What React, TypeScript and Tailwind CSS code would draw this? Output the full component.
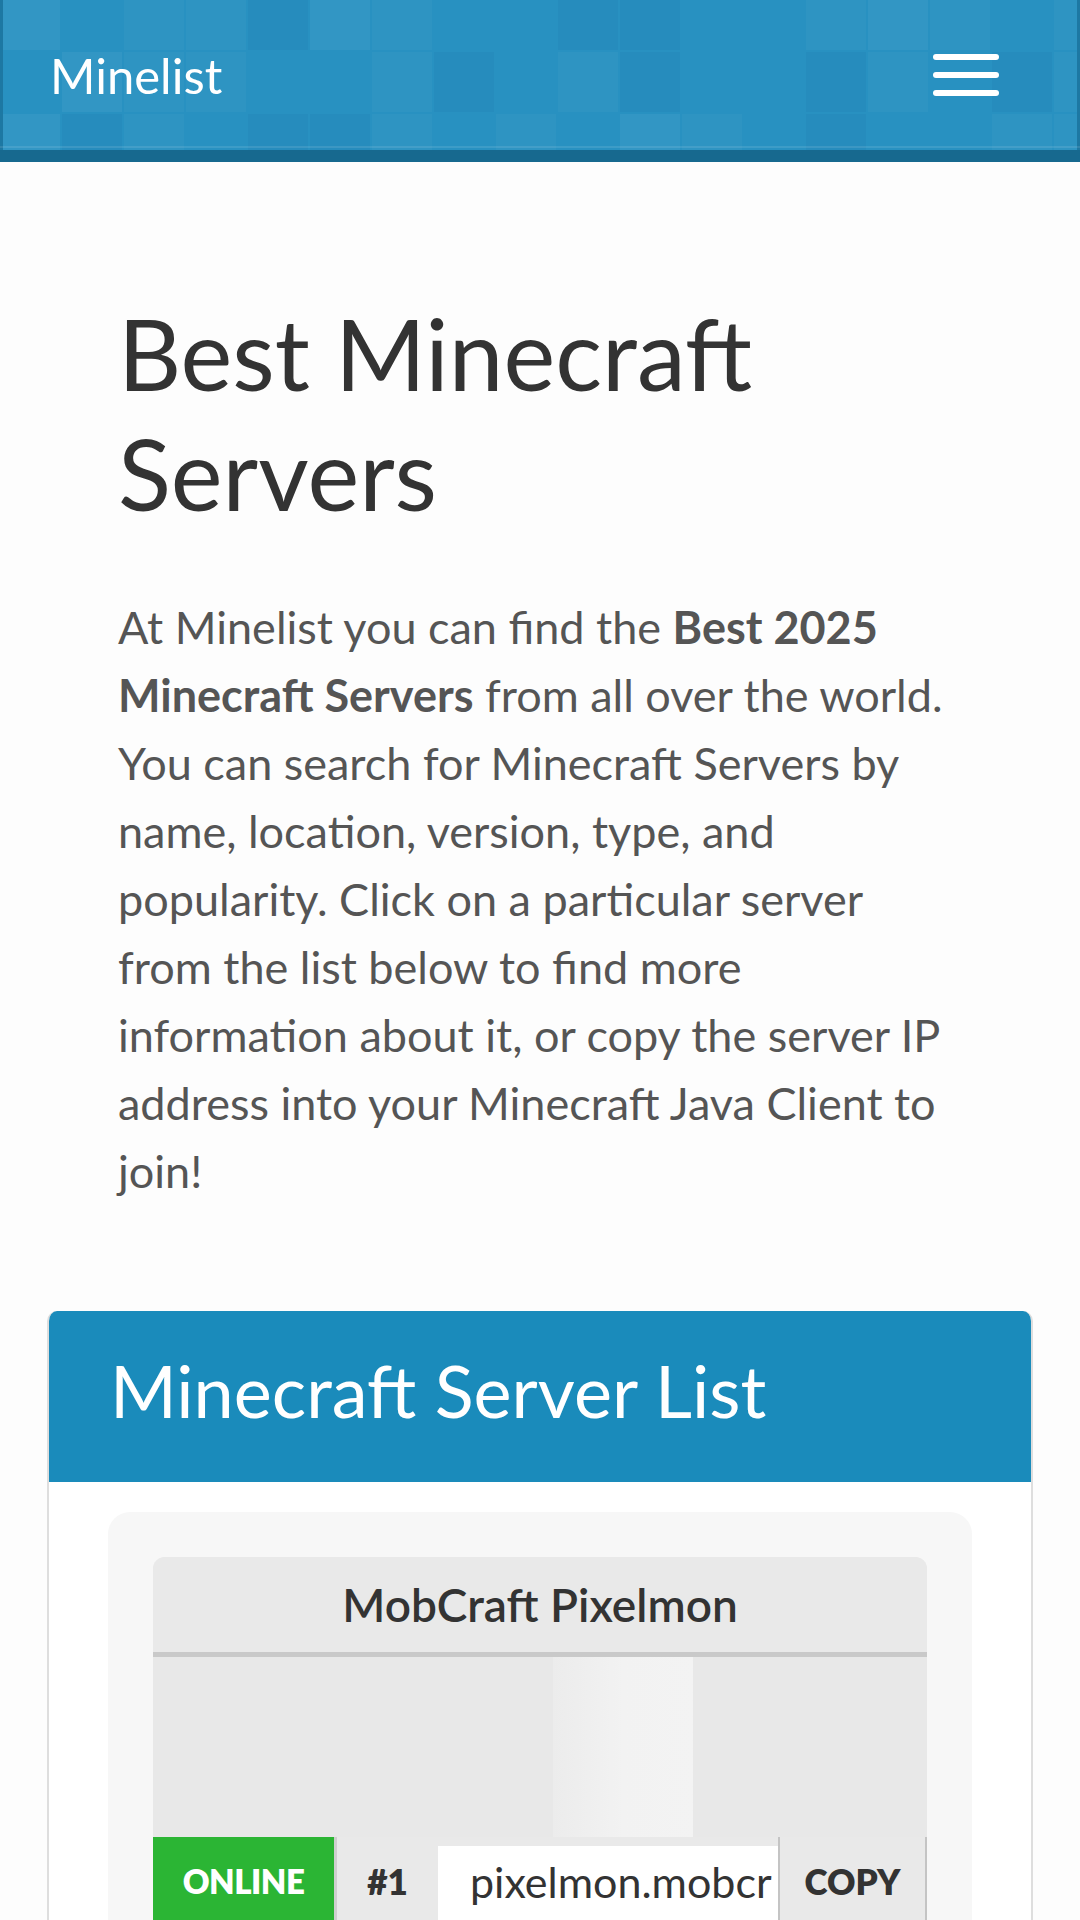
import React from "react";

function tiles() {
  const out: { x: number; y: number; w: number; h: number; c: string }[] = [];
  let s = 7;
  const rnd = () => {
    s = (s * 9301 + 49297) % 233280;
    return s / 233280;
  };
  const size = 62;
  for (let y = -10; y < 160; y += size) {
    for (let x = 0; x < 1080; x += size) {
      const r = rnd();
      let c = "";
      if (r < 0.25) c = "rgba(255,255,255,0.03)";
      else if (r < 0.45) c = "rgba(0,40,80,0.035)";
      else if (r < 0.55) c = "rgba(255,255,255,0.05)";
      if (c) out.push({ x, y, w: size - 2, h: size - 2, c });
    }
  }
  return out;
}

const T = tiles();

export default function App() {
  return (
    <div
      className="min-h-[1920px] bg-[#fdfdfd] text-[#555]"
      style={{ fontFamily: "Lato, 'Noto Sans', sans-serif" }}
    >
      {/* Header */}
      <header className="relative h-[162px] overflow-hidden border-b-[12px] border-[#17698f] bg-[#2891c1]">
        <svg
          className="absolute inset-0"
          width="1080"
          height="150"
          viewBox="0 0 1080 150"
        >
          {T.map((t, i) => (
            <rect key={i} x={t.x} y={t.y} width={t.w} height={t.h} fill={t.c} />
          ))}
          <rect x="0" y="0" width="3" height="150" fill="#1d78a3" />
          <rect x="1077" y="0" width="3" height="150" fill="#1d78a3" />
          <rect x="0" y="146" width="1080" height="2" fill="rgba(255,255,255,0.1)" />
        </svg>
        <div className="relative flex h-[150px] items-center justify-between pl-[50px] pr-[81px]">
          <span className="text-[49px] leading-none text-white">Minelist</span>
          <div className="flex w-[66px] flex-col gap-[12px]">
            <span className="h-[6px] rounded-full bg-white" />
            <span className="h-[6px] rounded-full bg-white" />
            <span className="h-[6px] rounded-full bg-white" />
          </div>
        </div>
      </header>

      {/* Intro */}
      <section className="px-[118px] pt-[131px]">
        <h1 className="text-[98px] font-normal leading-[120px] text-[#333]">
          Best Minecraft
          <br />
          Servers
        </h1>
        <p className="mt-[60px] whitespace-nowrap text-[45px] leading-[68px] text-[#555]">
          At Minelist you can find the <b className="font-bold">Best 2025</b>
          <br />
          <b className="font-bold">Minecraft Servers</b> from all over the world.
          <br />
          You can search for Minecraft Servers by
          <br />
          name, location, version, type, and
          <br />
          popularity. Click on a particular server
          <br />
          from the list below to find more
          <br />
          information about it, or copy the server IP
          <br />
          address into your Minecraft Java Client to
          <br />
          join!
        </p>
      </section>

      {/* Server list card */}
      <section className="mx-[47px] mt-[106px] overflow-hidden rounded-t-[10px] border-x-2 border-[#dedede] bg-white">
        <div className="flex h-[171px] items-start bg-[#1a8bbb] pl-[61px] pt-[29px]">
          <h2 className="text-[72px] font-normal leading-[100px] text-white">
            Minecraft Server List
          </h2>
        </div>
        <div className="px-[59px] pt-[30px]">
          <div className="rounded-t-[22px] bg-[#f7f7f7] px-[45px] pt-[45px]">
            <div className="overflow-hidden rounded-t-[12px] bg-[#e9e9e9]">
              <div className="flex h-[100px] items-center justify-center border-b-[5px] border-[#c9c9c9] bg-[#e9e9e9]">
                <span className="text-[46px] font-semibold text-[#333]">MobCraft Pixelmon</span>
              </div>
              <div className="relative h-[180px] bg-[#e8e8e8]">
                <div className="absolute left-[400px] top-0 h-full w-[140px] bg-gradient-to-r from-[#ececec] via-[#f2f2f2] to-[#f3f3f3]" />
              </div>
              <div className="flex h-[120px] items-start bg-[#e9e9e9]">
                <div className="flex h-full w-[184px] items-start justify-center border-r-[3px] border-[#cfcfcf] bg-[#2bb534] pt-[24px]">
                  <span className="text-[33px] font-extrabold leading-[40px] tracking-[-0.5px] text-white">
                    ONLINE
                  </span>
                </div>
                <div className="flex w-[101px] justify-center pt-[24px]">
                  <span className="text-[35px] font-extrabold leading-[40px] text-[#333]">#1</span>
                </div>
                <div className="mt-[9px] h-full w-[340px] bg-white">
                  <input
                    readOnly
                    value="pixelmon.mobcraft.net"
                    className="h-[70px] w-full bg-white pl-[32px] pr-[6px] text-[43px] text-[#333] outline-none"
                    style={{ fontFamily: "Lato, 'Noto Sans', sans-serif" }}
                  />
                </div>
                <div className="flex h-full flex-1 justify-center border-x-2 border-[#c4c4c4] pt-[24px]">
                  <span className="text-[35px] font-extrabold leading-[40px] text-[#333]">COPY</span>
                </div>
              </div>
            </div>
          </div>
        </div>
      </section>
    </div>
  );
}
